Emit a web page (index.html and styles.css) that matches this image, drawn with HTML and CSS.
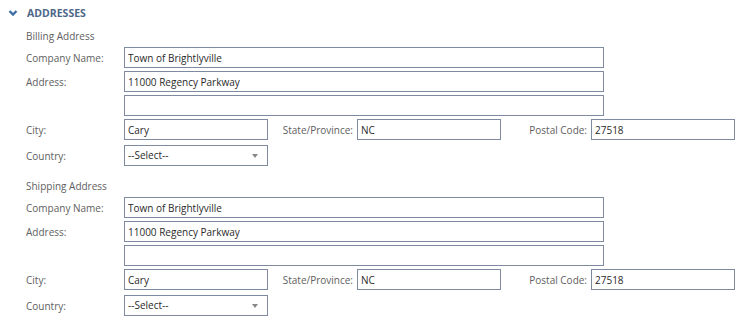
FILE: index.html
```html
<!DOCTYPE html>
<html lang="en">
<head>
    <meta charset="UTF-8">
    <title>Addresses</title>
    <link rel="stylesheet" href="styles.css">
</head>
<body>

    <div class="section-title">
        <svg class="chevron" width="10" height="8" viewBox="0 0 10 8">
            <polyline points="1.5,2 5,5.5 8.5,2" fill="none" stroke="#3b6ea5" stroke-width="2.4"/>
        </svg>
        <span>addresses</span>
    </div>

    <div class="address-group">
        <div class="group-title">Billing Address</div>
        <div class="row">
            <label>Company Name:</label>
            <input type="text" class="field wide" value="Town of Brightlyville">
        </div>
        <div class="row">
            <label>Address:</label>
            <input type="text" class="field wide" value="11000 Regency Parkway">
        </div>
        <div class="row">
            <label></label>
            <input type="text" class="field wide" value="">
        </div>
        <div class="row city-row">
            <label>City:</label>
            <input type="text" class="field short" value="Cary">
            <span class="inline-label state-label">State/Province:</span>
            <input type="text" class="field short" value="NC">
            <span class="inline-label postal-label">Postal Code:</span>
            <input type="text" class="field short" value="27518">
        </div>
        <div class="row country-row">
            <label>Country:</label>
            <div class="select">--Select--<span class="arrow"></span></div>
        </div>
    </div>

    <div class="address-group">
        <div class="group-title">Shipping Address</div>
        <div class="row">
            <label>Company Name:</label>
            <input type="text" class="field wide" value="Town of Brightlyville">
        </div>
        <div class="row">
            <label>Address:</label>
            <input type="text" class="field wide" value="11000 Regency Parkway">
        </div>
        <div class="row">
            <label></label>
            <input type="text" class="field wide" value="">
        </div>
        <div class="row city-row">
            <label>City:</label>
            <input type="text" class="field short" value="Cary">
            <span class="inline-label state-label">State/Province:</span>
            <input type="text" class="field short" value="NC">
            <span class="inline-label postal-label">Postal Code:</span>
            <input type="text" class="field short" value="27518">
        </div>
        <div class="row country-row">
            <label>Country:</label>
            <div class="select">--Select--<span class="arrow"></span></div>
        </div>
    </div>

</body>
</html>
```

FILE: styles.css
```css
* {
    box-sizing: border-box;
    margin: 0;
    padding: 0;
}

body {
    font-family: 'Open Sans', sans-serif;
    font-size: 10px;
    color: #606060;
    background: #fff;
    width: 752px;
    height: 326px;
    overflow: hidden;
}

.section-title {
    display: flex;
    align-items: center;
    height: 26px;
    padding-left: 8px;
    padding-bottom: 1px;
}

.chevron {
    margin-right: 9px;
}

.section-title span {
    text-transform: uppercase;
    font-weight: bold;
    font-size: 10.5px;
    color: #4d6788;
}

.address-group {
    padding-left: 26px;
    margin-top: 3px;
}

.address-group + .address-group {
    margin-top: 13px;
}

.group-title {
    height: 14px;
    line-height: 14px;
    margin-bottom: 4px;
}

.row {
    display: flex;
    align-items: center;
    margin-bottom: 3px;
}

.row label {
    width: 98px;
    flex-shrink: 0;
    padding-top: 1px;
}

.city-row {
    margin-top: 1px;
    margin-bottom: 5px;
}

.field {
    height: 21px;
    border: 1px solid #7d8aa0;
    padding: 0 3px;
    font-family: 'Open Sans', sans-serif;
    font-size: 10px;
    color: #2a2a2a;
    outline: none;
}

.wide {
    width: 480px;
}

.short {
    width: 144px;
}

.inline-label {
    text-align: right;
    padding-right: 4px;
    padding-top: 1px;
}

.state-label {
    width: 89px;
}

.postal-label {
    width: 90px;
}

.select {
    position: relative;
    width: 144px;
    height: 21px;
    line-height: 19px;
    border: 1px solid #7d8aa0;
    padding: 0 3px;
    color: #2a2a2a;
}

.arrow {
    position: absolute;
    right: 9px;
    top: 8px;
    border-left: 3px solid transparent;
    border-right: 3px solid transparent;
    border-top: 4px solid #888;
}
```
